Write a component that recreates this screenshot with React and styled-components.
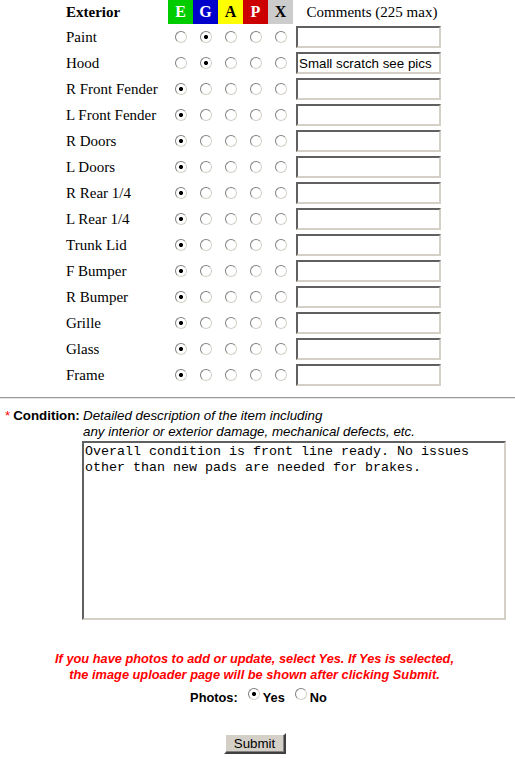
import React from 'react';
import styled, { createGlobalStyle } from 'styled-components';

const GlobalStyle = createGlobalStyle`
  body {
    margin: 0;
    background: #ffffff;
    font-family: "Liberation Serif", "Times New Roman", serif;
  }
`;

const grades = [
  { key: 'E', bg: '#00cc00', fg: '#ffffff' },
  { key: 'G', bg: '#0000cc', fg: '#ffffff' },
  { key: 'A', bg: '#ffff00', fg: '#000000' },
  { key: 'P', bg: '#cc0000', fg: '#ffffff' },
  { key: 'X', bg: '#cccccc', fg: '#000000' },
];

const parts = [
  { name: 'Paint', grade: 1, comment: '' },
  { name: 'Hood', grade: 1, comment: 'Small scratch see pics' },
  { name: 'R Front Fender', grade: 0, comment: '' },
  { name: 'L Front Fender', grade: 0, comment: '' },
  { name: 'R Doors', grade: 0, comment: '' },
  { name: 'L Doors', grade: 0, comment: '' },
  { name: 'R Rear 1/4', grade: 0, comment: '' },
  { name: 'L Rear 1/4', grade: 0, comment: '' },
  { name: 'Trunk Lid', grade: 0, comment: '' },
  { name: 'F Bumper', grade: 0, comment: '' },
  { name: 'R Bumper', grade: 0, comment: '' },
  { name: 'Grille', grade: 0, comment: '' },
  { name: 'Glass', grade: 0, comment: '' },
  { name: 'Frame', grade: 0, comment: '' },
];

const Page = styled.form`
  width: 515px;
  color: #000;
`;

const Grid = styled.div`
  display: grid;
  grid-template-columns: 104px repeat(5, 25px) 149px;
  grid-template-rows: 24px;
  grid-auto-rows: 26px;
  margin-left: 64px;
  width: 378px;
`;

const HeadLabel = styled.div`
  display: flex;
  align-items: center;
  padding-left: 2px;
  font-size: 15px;
  font-weight: bold;
`;

const GradeHead = styled.div`
  display: flex;
  align-items: center;
  justify-content: center;
  background: ${p => p.$bg};
  color: ${p => p.$fg};
  font-size: 16px;
  font-weight: bold;
`;

const CommentHead = styled.div`
  display: flex;
  align-items: center;
  justify-content: center;
  padding-left: 9px;
  font-size: 15px;
  white-space: nowrap;
`;

const PartLabel = styled.div`
  display: flex;
  align-items: center;
  padding-left: 2px;
  font-size: 15px;
  white-space: nowrap;
`;

const RadioCell = styled.div`
  display: flex;
  align-items: center;
  justify-content: center;
`;

const Radio = styled.input.attrs({ type: 'radio' })`
  appearance: none;
  margin: 0;
  width: 12px;
  height: 12px;
  border-radius: 50%;
  box-sizing: border-box;
  border: 1px solid;
  border-color: #808080 #d4d0c8 #d4d0c8 #808080;
  background: #ffffff;
  &:checked {
    background: radial-gradient(circle, #000 0 1.8px, #fff 2.3px);
  }
`;

const CommentCell = styled.div`
  display: flex;
  align-items: center;
  padding-left: 3px;
`;

const TextBox = styled.input.attrs({ type: 'text' })`
  box-sizing: border-box;
  width: 145px;
  height: 22px;
  margin: 0;
  padding: 0 1px;
  border: 2px solid;
  border-color: #606060 #d4d0c8 #d4d0c8 #606060;
  font-family: "Liberation Sans", Arial, sans-serif;
  font-size: 13.33px;
  color: #000;
  background: #fff;
  outline: none;
`;

const Rule = styled.div`
  margin-top: 9px;
  border-top: 1px solid #999999;
  border-bottom: 1px solid #e6e6e6;
`;

const ConditionRow = styled.div`
  display: flex;
  margin-top: 9px;
  font-family: "Liberation Sans", Arial, sans-serif;
`;

const ConditionLabel = styled.div`
  width: 77px;
  padding-left: 5px;
  font-size: 13.33px;
  font-weight: bold;
  line-height: 16px;
  white-space: nowrap;
`;

const Star = styled.span`
  color: #ff0000;
  font-weight: normal;
  margin-right: 3px;
`;

const ConditionBody = styled.div`
  display: flex;
  flex-direction: column;
`;

const Hint = styled.div`
  font-size: 13.33px;
  font-style: italic;
  line-height: 16px;
  padding-left: 1px;
`;

const Description = styled.textarea`
  box-sizing: border-box;
  width: 424px;
  height: 179px;
  margin: 1px 0 0 0;
  padding: 1px;
  border: 2px solid;
  border-color: #606060 #d4d0c8 #d4d0c8 #606060;
  font-family: "Liberation Mono", "Courier New", monospace;
  font-size: 13.33px;
  line-height: 16px;
  resize: none;
  outline: none;
  color: #000;
`;

const Footer = styled.div`
  width: 509px;
  display: flex;
  flex-direction: column;
  align-items: center;
  font-family: "Liberation Sans", Arial, sans-serif;
`;

const Notice = styled.div`
  margin-top: 31px;
  color: #ff0000;
  font-size: 12.8px;
  font-weight: bold;
  font-style: italic;
  line-height: 16px;
  text-align: center;
`;

const PhotoRow = styled.div`
  display: flex;
  align-items: center;
  margin-top: 6px;
  padding-left: 8px;
  height: 16px;
  font-size: 12.8px;
  font-weight: bold;
`;

const PhotoLabel = styled.span`
  margin-right: 10px;
`;

const Choice = styled.label`
  display: flex;
  align-items: center;
  gap: 3px;
  margin-right: 10px;
  &:last-child {
    margin-right: 0;
  }
  & input {
    position: relative;
    top: -3px;
  }
`;

const SubmitButton = styled.button`
  margin-top: 28px;
  width: 62px;
  height: 21px;
  padding: 0;
  background: #d4d0c8;
  border: 2px solid;
  border-color: #ffffff #404040 #404040 #ffffff;
  box-shadow: inset -1px -1px #808080;
  font-family: "Liberation Sans", Arial, sans-serif;
  font-size: 13.33px;
  color: #000;
`;

export default function App() {
  return (
    <Page onSubmit={e => e.preventDefault()}>
      <GlobalStyle />
      <Grid>
        <HeadLabel>Exterior</HeadLabel>
        {grades.map(g => (
          <GradeHead key={g.key} $bg={g.bg} $fg={g.fg}>{g.key}</GradeHead>
        ))}
        <CommentHead>Comments (225 max)</CommentHead>
        {parts.map(part => (
          <React.Fragment key={part.name}>
            <PartLabel>{part.name}</PartLabel>
            {grades.map((g, i) => (
              <RadioCell key={g.key}>
                <Radio name={part.name} defaultChecked={i === part.grade} />
              </RadioCell>
            ))}
            <CommentCell>
              <TextBox defaultValue={part.comment} maxLength={225} />
            </CommentCell>
          </React.Fragment>
        ))}
      </Grid>
      <Rule />
      <ConditionRow>
        <ConditionLabel><Star>*</Star>Condition:</ConditionLabel>
        <ConditionBody>
          <Hint>Detailed description of the item including</Hint>
          <Hint>any interior or exterior damage, mechanical defects, etc.</Hint>
          <Description defaultValue={'Overall condition is front line ready. No issues other than new pads are needed for brakes.'} />
        </ConditionBody>
      </ConditionRow>
      <Footer>
        <Notice>
          If you have photos to add or update, select Yes. If Yes is selected,<br />
          the image uploader page will be shown after clicking Submit.
        </Notice>
        <PhotoRow>
          <PhotoLabel>Photos:</PhotoLabel>
          <Choice><Radio name="photos" defaultChecked />Yes</Choice>
          <Choice><Radio name="photos" />No</Choice>
        </PhotoRow>
        <SubmitButton type="submit">Submit</SubmitButton>
      </Footer>
    </Page>
  );
}
